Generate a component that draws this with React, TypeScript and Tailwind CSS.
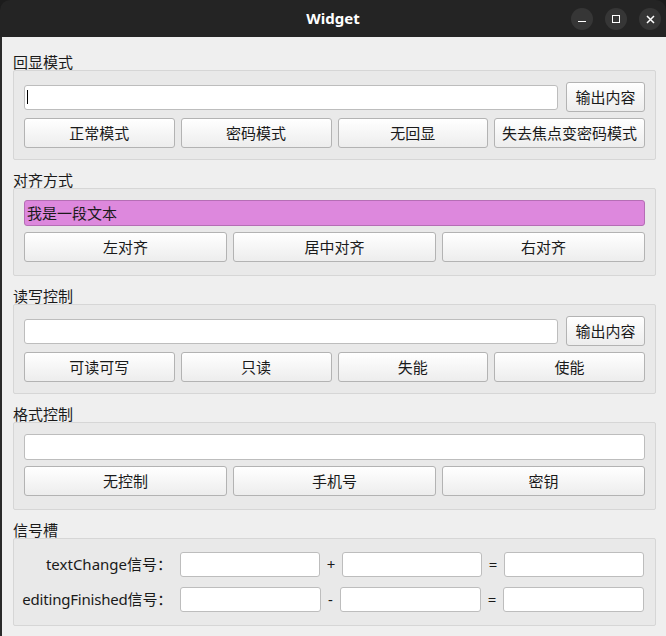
import React from "react";

const FONT = { fontFamily: '"Noto Sans", "Noto Sans CJK SC", sans-serif' };

function Btn({ label, className = "" }: { label: string; className?: string }) {
  return (
    <div
      className={`h-[30px] flex items-center justify-center rounded-[3px] border border-[#b3b3b3] bg-linear-to-b from-white to-[#ededed] text-[15px] leading-none text-[#1a1a1a] ${className}`}
    >
      {label}
    </div>
  );
}

function Edit({ className = "", children }: { className?: string; children?: React.ReactNode }) {
  return (
    <div className={`h-[25px] rounded-[3px] border border-[#bdbdbd] bg-white ${className}`}>{children}</div>
  );
}

function Group({
  title,
  first = false,
  children,
  className = "",
}: {
  title: string;
  first?: boolean;
  children: React.ReactNode;
  className?: string;
}) {
  return (
    <div>
      <div
        className={`${first ? "h-[33px] pt-[17px]" : "h-[28px] pt-[12px]"} text-[15px] leading-[16px] text-[#1a1a1a]`}
      >
        {title}
      </div>
      <div className={`rounded-[2px] border border-[#d6d6d6] bg-[#e9e9e9] px-[10px] flex flex-col ${className}`}>
        {children}
      </div>
    </div>
  );
}

export default function App() {
  return (
    <div className="w-[666px] h-[636px] bg-[#1c1c1c] overflow-hidden" style={FONT}>
      {/* title bar */}
      <div className="relative h-[37px] bg-[#242424] rounded-t-[10px] flex items-center justify-center">
        <span className="text-[15px] font-bold text-white">Widget</span>
        <div className="absolute right-[5px] top-[8px] flex gap-[12px]">
          <div className="w-[22px] h-[22px] rounded-full bg-[#363636] flex items-center justify-center">
            <div className="w-[8px] h-[1.5px] bg-white mt-[5px]" />
          </div>
          <div className="w-[22px] h-[22px] rounded-full bg-[#363636] flex items-center justify-center">
            <div className="w-[8px] h-[8px] border-[1.5px] border-white" />
          </div>
          <div className="w-[22px] h-[22px] rounded-full bg-[#363636] flex items-center justify-center">
            <svg width="9" height="9" viewBox="0 0 9 9">
              <path d="M1 1L8 8M8 1L1 8" stroke="white" strokeWidth="1.5" />
            </svg>
          </div>
        </div>
      </div>

      <div className="h-[599px] bg-[#efefef] border-l-2 border-[#2a2a2a] pl-[11px] pr-[10px]">
        <Group title="回显模式" first className="pt-[11px] pb-[11px] gap-[6px]">
          <div className="flex items-center gap-[8px]">
            <Edit className="flex-1 border-[#2f7bd0] flex items-center pl-[2px]">
              <div className="w-px h-[14px] bg-black" />
            </Edit>
            <Btn label="输出内容" className="w-[79px]" />
          </div>
          <div className="grid grid-cols-4 gap-[6px]">
            <Btn label="正常模式" />
            <Btn label="密码模式" />
            <Btn label="无回显" />
            <Btn label="失去焦点变密码模式" />
          </div>
        </Group>

        <Group title="对齐方式" className="pt-[11px] pb-[13px] gap-[6px]">
          <div className="h-[26px] rounded-[3px] border border-[#b56eb5] bg-[#dd88dd] flex items-center pl-[2px] text-[15px] text-[#1a1a1a]">
            我是一段文本
          </div>
          <div className="grid grid-cols-3 gap-[6px]">
            <Btn label="左对齐" />
            <Btn label="居中对齐" />
            <Btn label="右对齐" />
          </div>
        </Group>

        <Group title="读写控制" className="pt-[11px] pb-[11px] gap-[6px]">
          <div className="flex items-center gap-[8px]">
            <Edit className="flex-1" />
            <Btn label="输出内容" className="w-[79px]" />
          </div>
          <div className="grid grid-cols-4 gap-[6px]">
            <Btn label="可读可写" />
            <Btn label="只读" />
            <Btn label="失能" />
            <Btn label="使能" />
          </div>
        </Group>

        <Group title="格式控制" className="pt-[11px] pb-[13px] gap-[6px]">
          <Edit className="h-[26px]" />
          <div className="grid grid-cols-3 gap-[6px]">
            <Btn label="无控制" />
            <Btn label="手机号" />
            <Btn label="密钥" />
          </div>
        </Group>

        <Group title="信号槽" className="pt-[13px] pb-[13px] gap-[10px] text-[15px] text-[#1a1a1a]">
          <div className="flex items-center">
            <div className="w-[148px] flex justify-end whitespace-nowrap leading-none">textChange信号：</div>
            <Edit className="ml-[8px] w-[140px]" />
            <div className="w-[22px] text-center leading-none">+</div>
            <Edit className="w-[140px]" />
            <div className="w-[22px] text-center leading-none">=</div>
            <Edit className="w-[140px]" />
          </div>
          <div className="flex items-center">
            <div className="w-[148px] flex justify-end whitespace-nowrap leading-none tracking-[-0.2px]">
              editingFinished信号：
            </div>
            <Edit className="ml-[8px] w-[141px]" />
            <div className="w-[19px] text-center leading-none">-</div>
            <Edit className="w-[141px]" />
            <div className="w-[22px] text-center leading-none">=</div>
            <Edit className="w-[141px]" />
          </div>
        </Group>
      </div>
    </div>
  );
}
